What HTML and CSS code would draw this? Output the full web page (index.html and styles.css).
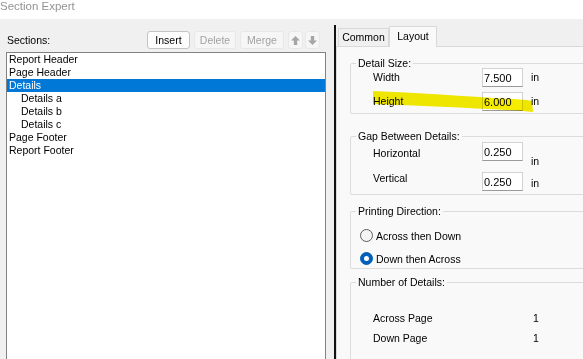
FILE: index.html
```html
<!DOCTYPE html>
<html lang="en">
<head>
    <meta charset="UTF-8">
    <title>Section Expert</title>
    <link rel="stylesheet" href="styles.css">
</head>
<body>
    <div class="titlebar"><span class="titleText">Section Expert</span></div>

    <div class="dialog">
        <!-- Sections list -->
        <div class="sections">
            <div class="sectionsHead">
                <span class="sectionsLabel">Sections:</span>
                <div class="toolbar">
                    <button class="btn btnInsert">Insert</button>
                    <button class="btn btnDelete" disabled>Delete</button>
                    <button class="btn btnMerge" disabled>Merge</button>
                    <button class="btn btnIcon" disabled>
                        <svg width="9" height="9" viewBox="0 0 9 9"><path d="M4.5 0 L9 4.6 H6.2 V9 H2.8 V4.6 H0 Z" fill="#a6a6a6"/></svg>
                    </button>
                    <button class="btn btnIcon btnDown" disabled>
                        <svg width="9" height="9" viewBox="0 0 9 9"><path d="M4.5 9 L9 4.4 H6.2 V0 H2.8 V4.4 H0 Z" fill="#a6a6a6"/></svg>
                    </button>
                </div>
            </div>
            <ul class="sectionList">
                <li>Report Header</li>
                <li>Page Header</li>
                <li class="selected">Details</li>
                <li class="sub">Details a</li>
                <li class="sub">Details b</li>
                <li class="sub">Details c</li>
                <li>Page Footer</li>
                <li>Report Footer</li>
            </ul>
        </div>

        <div class="splitter"></div>

        <!-- Properties -->
        <div class="props">
            <div class="tabs">
                <div class="tab tabCommon">Common</div>
                <div class="tab tabLayout active">Layout</div>
            </div>
            <div class="tabPage">
                <div class="group groupSize">
                    <div class="groupTitle">Detail Size:</div>
                    <div class="field">
                        <span class="fieldLabel">Width</span>
                        <input class="num" type="text" value="7.500">
                        <span class="unit">in</span>
                    </div>
                    <div class="field fieldSecond">
                        <span class="fieldLabel">Height</span>
                        <input class="num" type="text" value="6.000">
                        <span class="unit">in</span>
                    </div>
                </div>

                <div class="group groupGap">
                    <div class="groupTitle">Gap Between Details:</div>
                    <div class="field gapRow gapFirst">
                        <span class="fieldLabel">Horizontal</span>
                        <input class="num" type="text" value="0.250">
                        <span class="unit">in</span>
                    </div>
                    <div class="field gapRow gapSecond">
                        <span class="fieldLabel">Vertical</span>
                        <input class="num" type="text" value="0.250">
                        <span class="unit">in</span>
                    </div>
                </div>

                <div class="group groupDirection">
                    <div class="groupTitle">Printing Direction:</div>
                    <div class="radioRow radioFirst">
                        <span class="radio"></span>
                        <span>Across then Down</span>
                    </div>
                    <div class="radioRow radioSecond">
                        <span class="radio checked"></span>
                        <span>Down then Across</span>
                    </div>
                </div>

                <div class="group groupCount">
                    <div class="groupTitle">Number of Details:</div>
                    <div class="countRow countFirst">
                        <span class="countLabel">Across Page</span>
                        <span>1</span>
                    </div>
                    <div class="countRow countSecond">
                        <span class="countLabel">Down Page</span>
                        <span>1</span>
                    </div>
                </div>
            </div>
        </div>
    </div>

    <!-- highlighter stroke drawn over the Height row -->
    <svg class="marker" width="583" height="359" viewBox="0 0 583 359">
        <path d="M373 91 C420 93 478 97 526 100 L532 101 L533 112 L523 111 C478 108 420 106 373 104 Z" fill="#f5ec00"/>
    </svg>
</body>
</html>
```

FILE: styles.css
```css
html, body {
    margin: 0;
    padding: 0;
    height: 100%;
    overflow: hidden;
}

body {
    font-family: "Liberation Sans", Arial, sans-serif;
    font-size: 10.5px;
    color: #000;
    background-color: #f0f0f0;
}

.titlebar {
    height: 19px;
    background: #fff;
    overflow: hidden;
}

.titleText {
    display: block;
    font-size: 11.5px;
    line-height: 13px;
    color: #939393;
}

.dialog {
    display: flex;
    height: 340px;
    overflow: hidden;
}

/* left side */
.sections {
    width: 320px;
    padding: 12px 8px 0 6px;
}

.sectionsHead {
    display: flex;
    align-items: center;
    height: 18px;
    padding-right: 6px;
}

.sectionsLabel {
    padding-left: 1px;
}

.toolbar {
    display: flex;
    margin-left: auto;
    gap: 4px;
}

.btn {
    box-sizing: border-box;
    height: 18px;
    padding: 0;
    font-family: inherit;
    font-size: 10.5px;
    color: #000;
    background: #fdfdfd;
    border: 1px solid #c4c4c4;
    border-radius: 3px;
}

.btn:disabled {
    color: #a2a2a2;
    background: #f6f6f6;
    border-color: #e8e8e8;
}

.btnInsert { width: 43px; }
.btnDelete { width: 42px; }
.btnMerge { width: 44px; }

.btnIcon {
    width: 15px;
    display: flex;
    align-items: center;
    justify-content: center;
}

.btnDown {
    margin-left: -2px;
}

.sectionList {
    list-style: none;
    margin: 3px 0 0;
    padding: 0;
    height: 330px;
    background: #fff;
    border: 1px solid #828282;
}

.sectionList li {
    height: 13px;
    line-height: 13px;
    padding-left: 2px;
    white-space: nowrap;
}

.sectionList li.sub {
    padding-left: 14px;
}

.sectionList li.selected {
    background: #0078d7;
    color: #fff;
}

.splitter {
    width: 2px;
    margin-top: 6px;
    background: #111;
}

/* right side */
.props {
    flex: 1;
    display: flex;
    flex-direction: column;
    overflow: hidden;
}

.tabs {
    display: flex;
    align-items: flex-end;
    padding: 7px 0 0 2px;
}

.tab {
    box-sizing: border-box;
    text-align: center;
    border: 1px solid #d9d9d9;
    border-bottom: none;
}

.tabCommon {
    width: 51px;
    height: 18px;
    line-height: 17px;
    background: #f0f0f0;
}

.tabLayout {
    position: relative;
    width: 48px;
    height: 21px;
    line-height: 19px;
    margin-bottom: -1px;
    background: #f9f9f9;
}

.tabPage {
    flex: 1;
    background: #f9f9f9;
    border-top: 1px solid #d9d9d9;
    border-left: 1px solid #d9d9d9;
    padding: 16px 0 0 13px;
}

.group {
    width: 260px;
    border: 1px solid #dcdcdc;
    border-radius: 2px;
}

.groupTitle {
    width: fit-content;
    line-height: 13px;
    margin: -7px 0 -2px 5px;
    padding: 0 2px;
    background: #f9f9f9;
}

.groupSize {
    padding-bottom: 2px;
}

.groupGap {
    margin-top: 22px;
    padding-bottom: 3px;
}

.groupDirection {
    margin-top: 16px;
    padding-bottom: 1px;
}

.groupCount {
    margin-top: 13px;
    padding-bottom: 20px;
}

.field {
    display: flex;
    align-items: center;
    height: 19px;
    padding-left: 22px;
}

.fieldSecond {
    margin-top: 5px;
}

.fieldLabel {
    width: 109px;
    line-height: 13px;
}

.num {
    box-sizing: border-box;
    width: 41px;
    height: 19px;
    margin: 0;
    padding: 0 0 0 1px;
    font-family: inherit;
    font-size: 11px;
    color: #000;
    background: #fff;
    border: 1px solid #d2d2d2;
    border-bottom-color: #9a9a9a;
    outline: none;
}

.unit {
    margin-left: 8px;
    line-height: 13px;
}

.gapRow {
    align-items: flex-start;
}

.gapFirst {
    margin-top: 1px;
}

.gapFirst .fieldLabel { padding-top: 5px; }
.gapFirst .unit { padding-top: 13px; }

.gapSecond {
    margin-top: 11px;
}

.gapSecond .unit { padding-top: 5px; }

.radioRow {
    display: flex;
    align-items: center;
    gap: 3px;
    height: 17px;
    padding-left: 9px;
}

.radioFirst { margin-top: 11px; }
.radioSecond { margin-top: 6px; }

.radio {
    box-sizing: border-box;
    width: 13px;
    height: 13px;
    border: 1px solid #5c5c5c;
    border-radius: 50%;
    background: #f5f5f5;
}

.radio.checked {
    background: #005fb8;
    border-color: #005fb8;
}

.radio.checked::after {
    content: "";
    display: block;
    width: 5px;
    height: 5px;
    margin: 3px;
    border-radius: 50%;
    background: #fff;
}

.countRow {
    display: flex;
    line-height: 13px;
    padding-left: 22px;
}

.countFirst { margin-top: 25px; }
.countSecond { margin-top: 7px; }

.countLabel {
    width: 160px;
}

.marker {
    position: absolute;
    top: 0;
    left: 0;
    pointer-events: none;
    mix-blend-mode: multiply;
}
```
